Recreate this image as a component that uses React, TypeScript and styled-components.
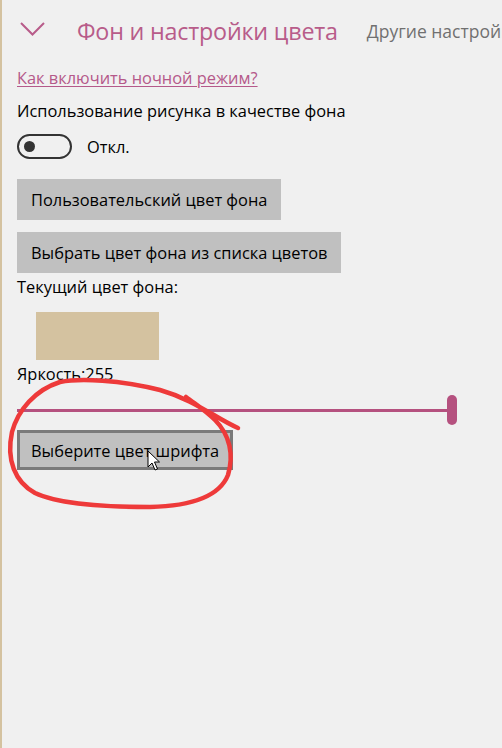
import React from "react";
import styled, { createGlobalStyle } from "styled-components";

const Global = createGlobalStyle`
  html, body { margin: 0; padding: 0; background: #f0f0f0; }
  body { font-family: "Open Sans", "Noto Sans", sans-serif; color: #000; }
`;

const Page = styled.div`
  position: relative;
  display: flex;
  width: 502px;
  height: 748px;
  overflow: hidden;
  background: #f0f0f0;
`;

const Strip = styled.div`
  width: 2px;
  flex: none;
  background: #d4c2a0;
`;

const Main = styled.div`
  flex: 1;
  display: flex;
  flex-direction: column;
  align-items: flex-start;
  padding-left: 15px;
  min-width: 0;
`;

const Header = styled.div`
  display: flex;
  align-items: center;
  height: 34px;
  margin-top: 14px;
  padding-left: 3px;
  white-space: nowrap;
  width: 600px;
`;

const Chevron = styled.svg`
  width: 25px;
  height: 14px;
  flex: none;
  margin-right: 32px;
  margin-top: -4px;
`;

const Title = styled.span`
  font-size: 23.3px;
  color: #b85c8a;
  letter-spacing: -0.2px;
  margin-right: 29px;
`;

const Other = styled.span`
  font-size: 17.5px;
  color: #707070;
`;

const Link = styled.a`
  margin-top: 19px;
  font-size: 16.4px;
  color: #b5598a;
  text-decoration: underline;
  text-underline-offset: 2px;
  line-height: 22px;
`;

const Label = styled.div<{ $mt: number }>`
  margin-top: ${(p) => p.$mt}px;
  font-size: 16.4px;
  line-height: 22px;
  white-space: nowrap;
`;

const ToggleRow = styled.div`
  display: flex;
  align-items: center;
  gap: 15px;
  margin-top: 12px;
  font-size: 16.4px;
`;

const Toggle = styled.div`
  box-sizing: border-box;
  width: 55px;
  height: 25px;
  border: 2px solid #333;
  border-radius: 13px;
  display: flex;
  align-items: center;
  padding-left: 5px;
`;

const Knob = styled.div`
  width: 11px;
  height: 11px;
  border-radius: 50%;
  background: #333;
`;

const Button = styled.button<{ $focused?: boolean; $mt: number }>`
  box-sizing: border-box;
  margin-top: ${(p) => p.$mt}px;
  height: ${(p) => (p.$focused ? 40 : 41)}px;
  padding: 0 ${(p) => (p.$focused ? 11 : 14)}px;
  background: #c0c0c0;
  border: ${(p) => (p.$focused ? "3px solid #7a7a7a" : "none")};
  font-family: "Open Sans", "Noto Sans", sans-serif;
  font-size: 16.4px;
  color: #000;
  white-space: nowrap;
`;

const Swatch = styled.div`
  margin: 14px 0 0 19px;
  width: 123px;
  height: 48px;
  background: #d4c2a0;
`;

const Slider = styled.div`
  margin-top: 10px;
  width: 440px;
  height: 30px;
  display: flex;
  align-items: center;
`;

const Track = styled.div`
  flex: 1;
  height: 3px;
  background: #b5517f;
`;

const Thumb = styled.div`
  width: 10px;
  height: 30px;
  border-radius: 5px;
  background: #b5517f;
  margin-left: -6px;
`;

const Overlay = styled.svg`
  position: absolute;
  left: 0;
  top: 0;
  width: 502px;
  height: 748px;
  pointer-events: none;
`;

export default function App() {
  return (
    <>
      <Global />
      <Page>
        <Strip />
        <Main>
          <Header>
            <Chevron viewBox="0 0 25 14">
              <path d="M1 1 L12.5 12.5 L24 1" fill="none" stroke="#b85c8a" strokeWidth="2" />
            </Chevron>
            <Title>Фон и настройки цвета</Title>
            <Other>Другие настройки</Other>
          </Header>
          <Link href="#">Как включить ночной режим?</Link>
          <Label $mt={11}>Использование рисунка в качестве фона</Label>
          <ToggleRow>
            <Toggle>
              <Knob />
            </Toggle>
            <span>Откл.</span>
          </ToggleRow>
          <Button $mt={20}>Пользовательский цвет фона</Button>
          <Button $mt={12}>Выбрать цвет фона из списка цветов</Button>
          <Label $mt={3}>Текущий цвет фона:</Label>
          <Swatch />
          <Label $mt={3}>Яркость:255</Label>
          <Slider>
            <Track />
            <Thumb />
          </Slider>
          <Button $mt={5} $focused>
            Выберите цвет шрифта
          </Button>
        </Main>
        <Overlay viewBox="0 0 502 748">
          <path
            d="M238 428 C215 418 195 400 160 390 C120 380 80 378 60 382 C35 390 18 410 12 432 C6 460 15 482 35 493 C60 505 110 507 150 507 C195 506 220 495 228 475 C234 455 230 435 215 420 C205 410 195 404 186 397"
            fill="none"
            stroke="#ee3a3a"
            strokeWidth="4.5"
            strokeLinecap="round"
          />
          <path
            d="M148 451 L148 467 L152 463 L155 470 L157.5 469 L154.5 462 L159.5 462 Z"
            fill="#fff"
            stroke="#000"
            strokeWidth="1"
            strokeLinejoin="round"
          />
        </Overlay>
      </Page>
    </>
  );
}
